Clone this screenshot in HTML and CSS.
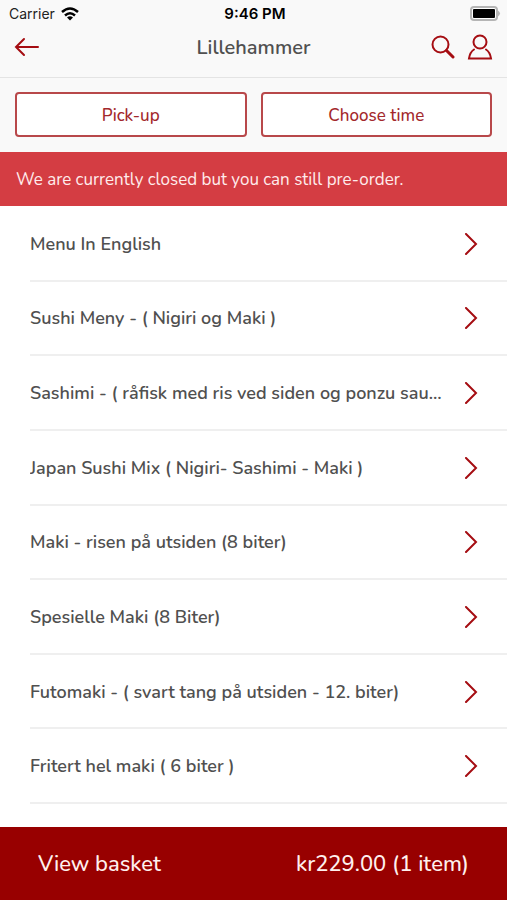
FILE: index.html
```html
<!DOCTYPE html>
<html lang="en">
<head>
    <meta charset="UTF-8">
    <meta name="viewport" content="width=device-width, initial-scale=1.0">
    <title>Lillehammer</title>
    <link rel="stylesheet" href="styles.css">
</head>
<body>

    <header class="top">
        <div class="status-bar">
            <div class="carrier">
                <span>Carrier</span>
                <svg width="18" height="14" viewBox="0 0 18 14">
                    <g fill="none" stroke="#000" stroke-width="2.500">
                        <path d="M1 5Q9-2 17 5"/>
                        <path d="M4 8.5Q9 4 14 8.5"/>
                    </g>
                    <path d="M6 10.5Q9 8 12 10.5L9 13.500Z"/>
                </svg>
            </div>
            <span class="clock">9:46 PM</span>
            <svg class="battery" width="31" height="15" viewBox="0 0 31 15">
                <rect x="1" y="1" width="26" height="13" rx="3" fill="#fff" stroke="#b5b5b5" stroke-width="2"/>
                <rect x="3" y="3" width="22" height="9" rx="1"/>
                <path d="M28 4.500Q32 7.500 28 10.500Z" fill="#b5b5b5"/>
            </svg>
        </div>

        <div class="nav-bar">
            <div class="nav-side">
                <button class="icon-btn" aria-label="Back">
                    <svg width="26" height="20" viewBox="0 0 26 20">
                        <path d="M24 10H2M10 2L2 10L10 18"/>
                    </svg>
                </button>
            </div>
            <h1>Lillehammer</h1>
            <div class="nav-side nav-right">
                <button class="icon-btn" aria-label="Search">
                    <svg width="24" height="26" viewBox="0 0 24 26">
                        <circle cx="9.500" cy="10.500" r="8"/>
                        <path d="M15.500 16.500L22 23" stroke-width="3"/>
                    </svg>
                </button>
                <button class="icon-btn" aria-label="Account">
                    <svg width="26" height="26" viewBox="0 0 26 26">
                        <circle cx="13" cy="8" r="6.500"/>
                        <path d="M7 15.500Q3 18 2 24.500H24Q23 18 19 15.500"/>
                    </svg>
                </button>
            </div>
        </div>
    </header>

    <div class="options">
        <button class="option-btn">Pick-up</button>
        <button class="option-btn">Choose time</button>
    </div>

    <p class="notice">We are currently closed but you can still pre-order.</p>

    <main class="menu">
        <a class="menu-item" href="#">
            <span class="name">Menu In English</span>
            <svg width="14" height="22" viewBox="0 0 14 22"><path d="M2 1L12 11L2 21"/></svg>
        </a>
        <a class="menu-item" href="#">
            <span class="name">Sushi Meny - ( Nigiri og Maki )</span>
            <svg width="14" height="22" viewBox="0 0 14 22"><path d="M2 1L12 11L2 21"/></svg>
        </a>
        <a class="menu-item" href="#">
            <span class="name">Sashimi - ( råfisk med ris ved siden og ponzu saus )</span>
            <svg width="14" height="22" viewBox="0 0 14 22"><path d="M2 1L12 11L2 21"/></svg>
        </a>
        <a class="menu-item" href="#">
            <span class="name">Japan Sushi Mix ( Nigiri- Sashimi - Maki )</span>
            <svg width="14" height="22" viewBox="0 0 14 22"><path d="M2 1L12 11L2 21"/></svg>
        </a>
        <a class="menu-item" href="#">
            <span class="name">Maki - risen på utsiden (8 biter)</span>
            <svg width="14" height="22" viewBox="0 0 14 22"><path d="M2 1L12 11L2 21"/></svg>
        </a>
        <a class="menu-item" href="#">
            <span class="name">Spesielle Maki (8 Biter)</span>
            <svg width="14" height="22" viewBox="0 0 14 22"><path d="M2 1L12 11L2 21"/></svg>
        </a>
        <a class="menu-item" href="#">
            <span class="name">Futomaki - ( svart tang på utsiden - 12. biter)</span>
            <svg width="14" height="22" viewBox="0 0 14 22"><path d="M2 1L12 11L2 21"/></svg>
        </a>
        <a class="menu-item" href="#">
            <span class="name">Fritert hel maki ( 6 biter )</span>
            <svg width="14" height="22" viewBox="0 0 14 22"><path d="M2 1L12 11L2 21"/></svg>
        </a>
    </main>

    <button class="basket">
        <span>View basket</span>
        <span>kr229.00 (1 item)</span>
    </button>

</body>
</html>
```
FILE: styles.css
```css
* {
    box-sizing: border-box;
}

body {
    margin: 0;
    min-height: 100vh;
    display: flex;
    flex-direction: column;
    background-color: #fff;
    color: #505050;
    font-family: Nunito, "Noto Sans", sans-serif;
    font-size: 18px;
}

button {
    font-family: inherit;
    cursor: pointer;
}

svg {
    display: block;
    flex-shrink: 0;
}

.top {
    background-color: #f9f9f9;
    border-bottom: 1px solid #e4e4e4;
}

.status-bar,
.nav-bar {
    display: grid;
    grid-template-columns: 1fr auto 1fr;
    align-items: center;
}

.status-bar {
    height: 27px;
    padding: 0 6px 0 9px;
    color: #222;
    font-family: Inter, sans-serif;
    font-size: 14px;
}

.carrier {
    display: flex;
    align-items: center;
    gap: 6px;
}

.clock {
    color: #000;
    font-size: 15px;
    font-weight: 600;
}

.battery {
    justify-self: end;
}

.nav-bar {
    height: 50px;
    padding: 0 14px 10px;
}

.nav-bar h1 {
    margin: 0;
    font-size: 20px;
    font-weight: 600;
}

.nav-side {
    display: flex;
    align-items: center;
    gap: 12px;
}

.nav-right {
    justify-content: flex-end;
}

.icon-btn {
    padding: 0;
    border: none;
    background: none;
}

.icon-btn svg,
.menu-item svg {
    fill: none;
    stroke: #a50d12;
    stroke-width: 2;
    stroke-linecap: round;
}

.options {
    display: grid;
    grid-template-columns: 1fr 1fr;
    gap: 14px;
    padding: 14px 15px 15px;
    background-color: #f9f9f9;
}

.option-btn {
    height: 45px;
    padding: 2px 0 0;
    border: 2px solid #b8484a;
    border-radius: 4px;
    background-color: #fff;
    color: #a3282c;
    font-size: 17px;
    font-weight: 500;
}

.notice {
    margin: 0;
    padding: 16px 16px 14px;
    background-color: #d43d43;
    color: #ffecec;
    font-size: 17px;
    line-height: 24px;
}

.menu {
    flex: 1;
    display: grid;
    grid-auto-rows: 1fr;
    padding: 1px 0 23px 30px;
}

.menu-item {
    display: flex;
    align-items: center;
    justify-content: space-between;
    gap: 16px;
    min-width: 0;
    min-height: 64px;
    padding-top: 1px;
    padding-right: 29px;
    border-bottom: 2px solid #efefef;
    color: inherit;
    font-weight: 600;
    text-decoration: none;
}

.name {
    overflow: hidden;
    text-overflow: ellipsis;
    white-space: nowrap;
}

.basket {
    display: flex;
    align-items: center;
    justify-content: space-between;
    height: 73px;
    padding: 0 38px;
    border: none;
    background-color: #980000;
    color: #fff0ee;
    font-size: 22px;
    font-weight: 500;
}
```
